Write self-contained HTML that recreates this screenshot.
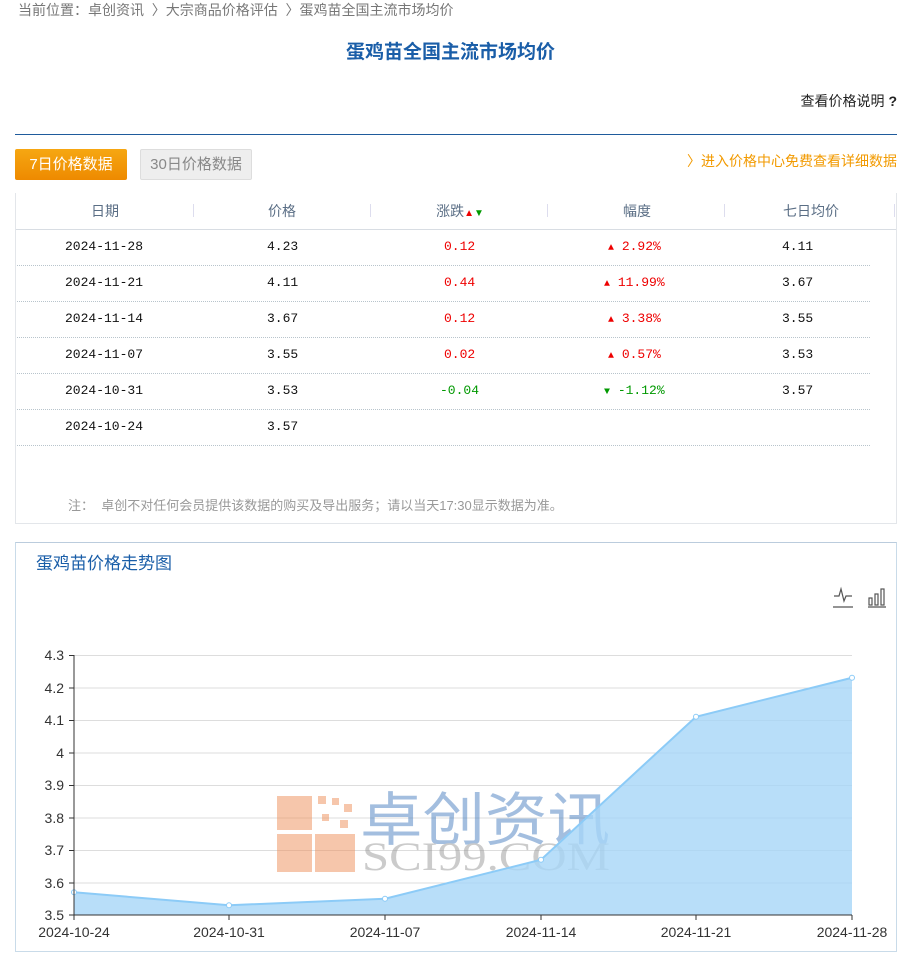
<!DOCTYPE html>
<html><head><meta charset="utf-8"><style>
*{margin:0;padding:0;box-sizing:border-box}
body{width:901px;height:957px;background:#fff;font-family:"Liberation Sans","Noto Sans CJK SC",sans-serif;position:relative;overflow:hidden;color:#333}
.a{position:absolute;white-space:nowrap}
.m{font-family:"Liberation Mono","Noto Sans CJK SC",monospace;font-size:13px;color:#111}
.r{color:#e00}.g{color:#090}
.line{position:absolute;left:17px;width:853px;border-top:1px dotted #b8c4cc}
.hd{position:absolute;top:201px;font-size:14px;color:#5a6e85;transform:translateX(-50%)}
.sep{position:absolute;top:204px;width:1px;height:13px;background:#dde}
</style></head><body>
<div class="a" style="left:18px;top:0px;font-size:14px;color:#777">当前位置：卓创资讯 &nbsp;〉大宗商品价格评估 &nbsp;〉蛋鸡苗全国主流市场均价</div>
<div class="a" style="left:0;width:901px;text-align:center;top:37px;font-size:19px;font-weight:bold;color:#1a5ea8">蛋鸡苗全国主流市场均价</div>
<div class="a" style="right:4px;top:91px;font-size:14px;color:#222">查看价格说明 <b>?</b></div>
<div class="a" style="left:15px;top:134px;width:882px;height:1px;background:#1f5b9c"></div>
<div class="a" style="left:15px;top:149px;width:112px;height:31px;background:linear-gradient(#f6a712,#ee8a00);border-radius:2px;color:#fff;font-size:15px;line-height:31px;text-align:center">7日价格数据</div>
<div class="a" style="left:140px;top:149px;width:112px;height:31px;background:#eee;border:1px solid #ddd;border-radius:2px;color:#888;font-size:15px;line-height:29px;text-align:center">30日价格数据</div>
<div class="a" style="right:4px;top:151px;font-size:14px;color:#f29a00">〉进入价格中心免费查看详细数据</div>
<div class="a" style="left:15px;top:193px;width:882px;height:331px;border:1px solid #e3e6ea;border-top:none"></div>
<div class="a" style="left:16px;top:193px;width:880px;height:37px;border-bottom:1px solid #d8dde3"></div>
<div class="hd" style="left:105px">日期</div>
<div class="hd" style="left:282px">价格</div>
<div class="hd" style="left:460px">涨跌<span style="color:#e00;font-size:10px">▲</span><span style="color:#090;font-size:10px">▼</span></div>
<div class="hd" style="left:637px">幅度</div>
<div class="hd" style="left:811px">七日均价</div>
<div class="sep" style="left:193px"></div><div class="sep" style="left:370px"></div><div class="sep" style="left:547px"></div><div class="sep" style="left:724px"></div><div class="sep" style="left:894px"></div>
<div class="line" style="top:265px"></div><div class="line" style="top:301px"></div><div class="line" style="top:337px"></div><div class="line" style="top:373px"></div><div class="line" style="top:409px"></div><div class="line" style="top:445px"></div>

<div class="a m" style="left:65px;top:239px">2024-11-28</div><div class="a m" style="left:267px;top:239px">4.23</div><div class="a m r" style="left:444px;top:239px">0.12</div><div class="a m r" style="left:608px;top:239px"><span style="font-size:10px">▲</span> 2.92%</div><div class="a m" style="left:782px;top:239px">4.11</div>
<div class="a m" style="left:65px;top:275px">2024-11-21</div><div class="a m" style="left:267px;top:275px">4.11</div><div class="a m r" style="left:444px;top:275px">0.44</div><div class="a m r" style="left:604px;top:275px"><span style="font-size:10px">▲</span> 11.99%</div><div class="a m" style="left:782px;top:275px">3.67</div>
<div class="a m" style="left:65px;top:311px">2024-11-14</div><div class="a m" style="left:267px;top:311px">3.67</div><div class="a m r" style="left:444px;top:311px">0.12</div><div class="a m r" style="left:608px;top:311px"><span style="font-size:10px">▲</span> 3.38%</div><div class="a m" style="left:782px;top:311px">3.55</div>
<div class="a m" style="left:65px;top:347px">2024-11-07</div><div class="a m" style="left:267px;top:347px">3.55</div><div class="a m r" style="left:444px;top:347px">0.02</div><div class="a m r" style="left:608px;top:347px"><span style="font-size:10px">▲</span> 0.57%</div><div class="a m" style="left:782px;top:347px">3.53</div>
<div class="a m" style="left:65px;top:383px">2024-10-31</div><div class="a m" style="left:267px;top:383px">3.53</div><div class="a m g" style="left:440px;top:383px">-0.04</div><div class="a m g" style="left:604px;top:383px"><span style="font-size:10px">▼</span> -1.12%</div><div class="a m" style="left:782px;top:383px">3.57</div>
<div class="a m" style="left:65px;top:419px">2024-10-24</div><div class="a m" style="left:267px;top:419px">3.57</div>
<div class="a" style="left:68px;top:495px;font-size:13px;color:#999">注： &nbsp;卓创不对任何会员提供该数据的购买及导出服务；请以当天17:30显示数据为准。</div>

<div class="a" style="left:15px;top:542px;width:882px;height:410px;border:1px solid #c9dbe9;border-top-color:#bcd"></div>
<div class="a" style="left:36px;top:549px;font-size:17px;color:#1a5ea8">蛋鸡苗价格走势图</div>

<svg class="a" style="left:0;top:0" width="901" height="957">
<g stroke="#555" stroke-width="1.2" fill="none">
<path d="M834 596 h5 l2 -7 l3 12 l2 -5 h6"/><path d="M833 607 h20"/>
<rect x="869" y="598" width="3" height="7"/><rect x="875" y="594" width="3" height="11"/><rect x="881" y="589" width="3" height="16"/><path d="M868 607 h18"/>
</g>
<g stroke="#ddd" stroke-width="1" fill="none">
<path d="M74 655.5H852M74 688H852M74 720.5H852M74 753H852M74 785.5H852M74 818H852M74 850.5H852M74 883H852"/>
</g>
<g opacity="0.5">
<rect x="277" y="796" width="35" height="34" fill="#ef8f5a"/><rect x="315" y="834" width="40" height="38" fill="#ef8f5a"/><rect x="277" y="834" width="35" height="38" fill="#ef8f5a"/>
<rect x="318" y="796" width="8" height="8" fill="#ef8f5a"/><rect x="332" y="798" width="7" height="7" fill="#ef8f5a"/><rect x="344" y="804" width="8" height="8" fill="#ef8f5a"/><rect x="322" y="814" width="7" height="7" fill="#ef8f5a"/><rect x="340" y="820" width="8" height="8" fill="#ef8f5a"/>
<text x="360" y="840" font-size="58" fill="#4a7fc0" font-family="Noto Sans CJK SC,sans-serif" textLength="250" lengthAdjust="spacingAndGlyphs">卓创资讯</text>
<text x="362" y="870" font-size="40" fill="#999" font-family="Liberation Serif,serif" textLength="248" lengthAdjust="spacingAndGlyphs">SCI99.COM</text>
</g>
<path d="M74 892.25 L229 905.25 L385 898.75 L541 859.75 L696 716.75 L852 677.75 L852 915 L74 915Z" fill="#a6d6f8" fill-opacity="0.8"/>
<path d="M74 892.25 L229 905.25 L385 898.75 L541 859.75 L696 716.75 L852 677.75" stroke="#8ccbf7" stroke-width="2" fill="none"/>
<g fill="#fff" stroke="#8ccbf7" stroke-width="1"><circle cx="74" cy="892.25" r="2.5"/><circle cx="229" cy="905.25" r="2.5"/><circle cx="385" cy="898.75" r="2.5"/><circle cx="541" cy="859.75" r="2.5"/><circle cx="696" cy="716.75" r="2.5"/><circle cx="852" cy="677.75" r="2.5"/></g>
<g stroke="#333" stroke-width="1" fill="none"><path d="M74 655V915H852"/><path d="M69 655.5h5M69 688h5M69 720.5h5M69 753h5M69 785.5h5M69 818h5M69 850.5h5M69 883h5M69 915h5"/><path d="M74 915v5M229 915v5M385 915v5M541 915v5M696 915v5M852 915v5"/></g>
<g font-size="14" fill="#333" font-family="Liberation Sans,sans-serif" text-anchor="end">
<text x="64" y="660">4.3</text><text x="64" y="693">4.2</text><text x="64" y="725">4.1</text><text x="64" y="758">4</text><text x="64" y="790">3.9</text><text x="64" y="823">3.8</text><text x="64" y="855">3.7</text><text x="64" y="888">3.6</text><text x="64" y="920">3.5</text>
</g>
<g font-size="14" fill="#333" font-family="Liberation Sans,sans-serif" text-anchor="middle">
<text x="74" y="937">2024-10-24</text><text x="229" y="937">2024-10-31</text><text x="385" y="937">2024-11-07</text><text x="541" y="937">2024-11-14</text><text x="696" y="937">2024-11-21</text><text x="852" y="937">2024-11-28</text>
</g>
</svg>
</body></html>
